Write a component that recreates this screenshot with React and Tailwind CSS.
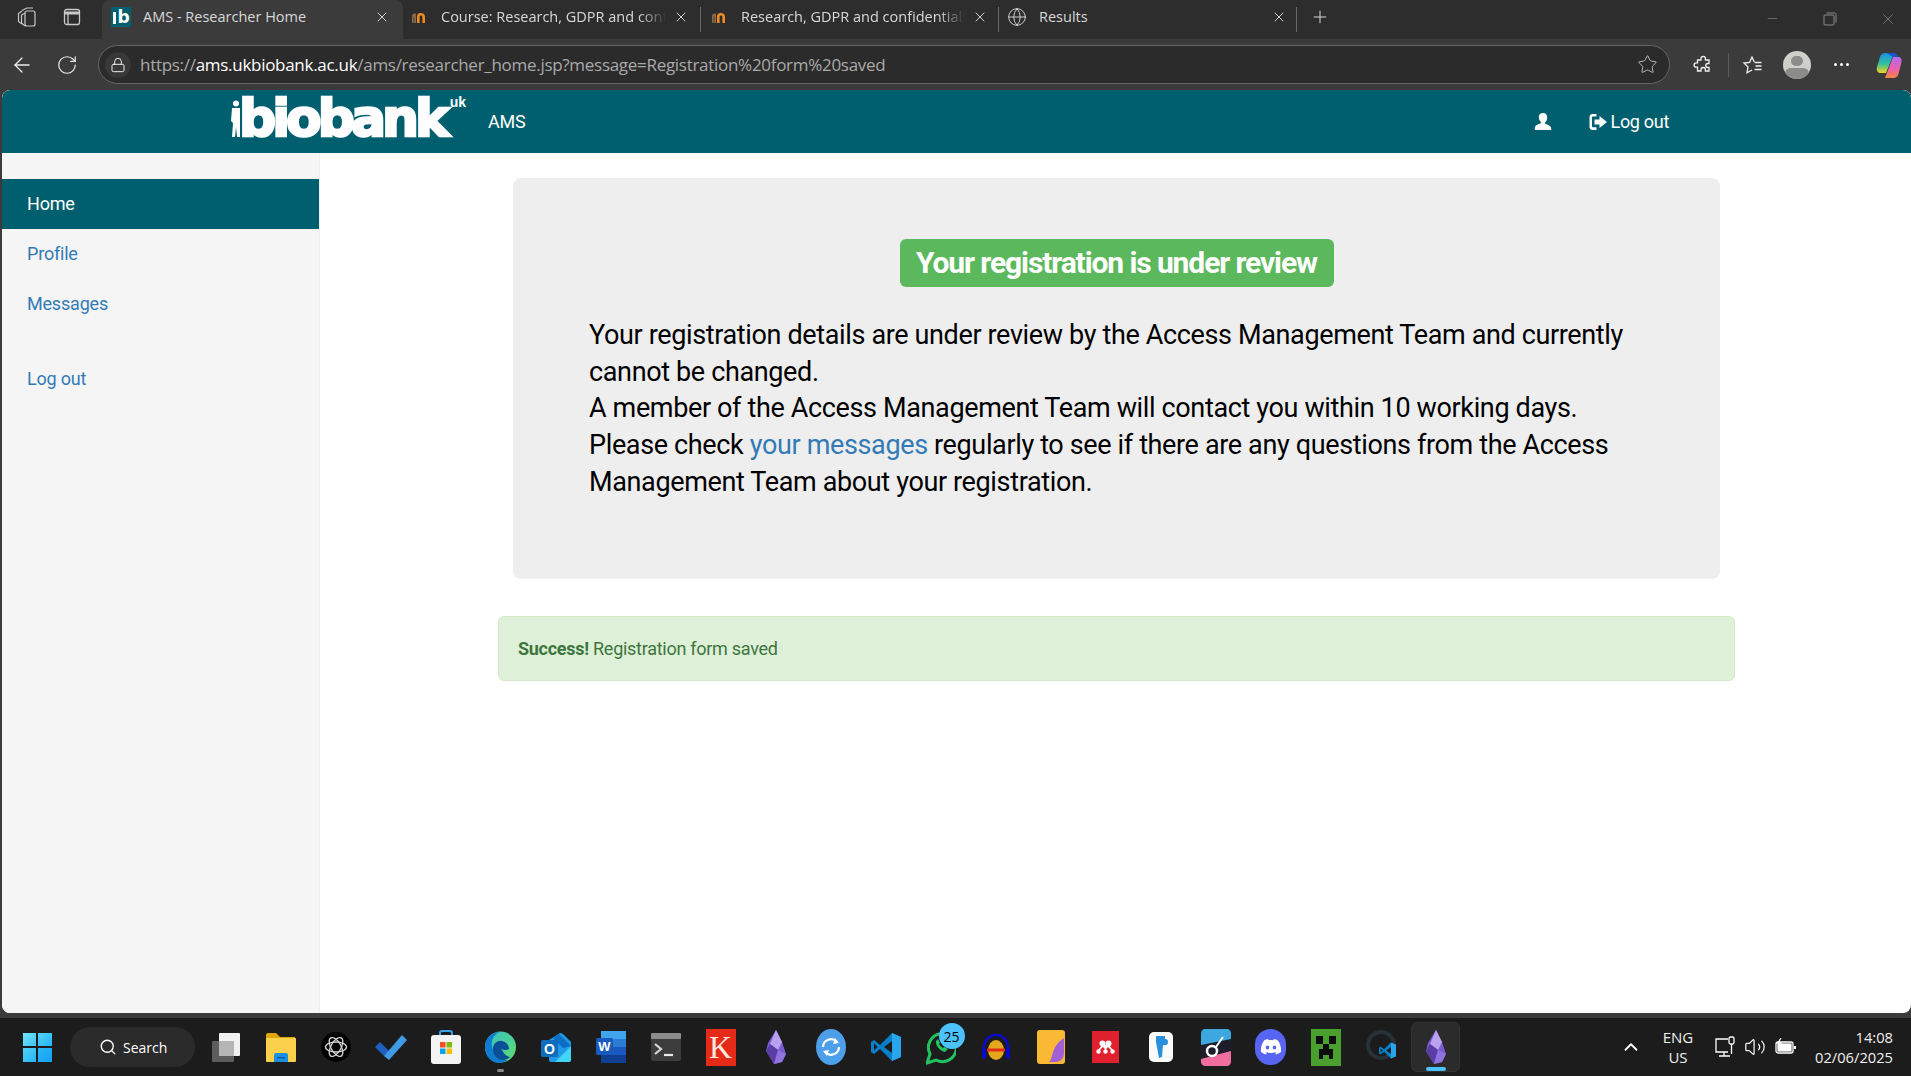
import { ArrowLeft, RotateCw, Lock, Star, X, Plus, Minus, Globe, Search, ChevronUp, Volume2 } from 'lucide-react';

const TEAL = 'bg-[#005f6e]';

function MoodleIcon() {
  return (
    <svg width="18" height="14" viewBox="0 0 18 14" className="shrink-0">
      <path d="M7 13V6.5C7 4 8.5 3 10.5 3S15 4 15 6.5V13h-2.6V7c0-1-.6-1.6-1.6-1.6S9.600 6 9.600 7v6z" fill="#f28a1d" />
      <path d="M2 13V6c0-1.500 1-2.500 2.500-2.500S6 4 6 5v8H4.200V6.500H3.600V13z" fill="#8a6a4a" />
    </svg>
  );
}

function Favicon() {
  return (
    <div className="w-5 h-5 bg-[#005f6e] shrink-0 flex items-center justify-center overflow-hidden">
      <div className="w-[3px] h-[12px] bg-white mr-[1px] mt-[2px]" />
      <span className="text-white font-bold text-[17px] leading-none tracking-[-1px] font-['DejaVu_Sans']">b</span>
    </div>
  );
}

function Tab({ icon, title, active, fade, sep, width, pad, closeRight }) {
  return (
    <div className={`relative ${width} h-[39px] flex items-center shrink-0 pb-[5px] ${pad} ${closeRight} ${active ? 'bg-[#3b3b3b] rounded-t-lg' : ''}`}>
      <div className="w-5 flex justify-center shrink-0">{icon}</div>
      <span className={`ml-3 flex-1 min-w-0 whitespace-nowrap overflow-hidden text-[14.5px] text-[#d8d8d8] font-['Open_Sans',sans-serif] ${fade ? '[mask-image:linear-gradient(to_right,black_88%,transparent)]' : ''}`}>
        {title}
      </span>
      <X size={16} strokeWidth={1.5} className="text-[#d0d0d0] ml-[7px] shrink-0" />
      {sep && <div className="absolute right-0 top-[7px] w-px h-[25px] bg-[#6a6a6a]" />}
    </div>
  );
}

function PuzzleOutline() {
  return (
    <svg width="20" height="20" viewBox="0 0 20 20" fill="none" stroke="#f0f0f0" strokeWidth="1.3">
      <path d="M8 3.500a2.200 2.200 0 0 1 4.400 0V5H16v3.500h-1.200a2 2 0 0 0 0 4H16V16h-3.600v-1.300a2.200 2.200 0 0 0-4.400 0V16H4.500v-3.800H3.300a2.200 2.200 0 0 1 0-4.400h1.200V5H8z" />
    </svg>
  );
}

function FavStar() {
  return (
    <svg width="22" height="20" viewBox="0 0 22 20" fill="none" stroke="#f0f0f0" strokeWidth="1.3">
      <path d="M12.300 7 10 2 7.600 7.300 2 8l4 4-1 5.800 5-2.800" />
      <path d="M12.500 7.500h7M13.500 11h6M12.500 14.500h7" />
    </svg>
  );
}

function Copilot() {
  return (
    <svg width="26" height="30" viewBox="0 0 26 30">
      <defs>
        <linearGradient id="cpa" x1="0" y1="0" x2="0" y2="1">
          <stop offset="0" stopColor="#1b8fe8" />
          <stop offset="0.55" stopColor="#35c29a" />
          <stop offset="1" stopColor="#f3d51e" />
        </linearGradient>
        <linearGradient id="cpb" x1="0" y1="0" x2="0" y2="1">
          <stop offset="0" stopColor="#b06cf0" />
          <stop offset="0.6" stopColor="#ee5fa5" />
          <stop offset="1" stopColor="#f4873d" />
        </linearGradient>
      </defs>
      <path d="M9 3h9l-8 20H5c-3 0-5-2-4-6l3-10c1-3 3-4 5-4z" fill="url(#cpa)" />
      <path d="M17 7h5c3 0 4 2 3.500 5l-3 12c-1 3-3 4-5 4H9l8-21z" fill="url(#cpb)" />
      <path d="M11 3h7c2 0 3 1 4 4h-5z" fill="#1457c8" />
    </svg>
  );
}

function TabBar() {
  return (
    <div className="h-[39px] bg-[#2d2d2d] flex items-center shrink-0">
      <div className="w-[102px] flex items-center shrink-0 pb-[5px]">
        <svg width="22" height="22" viewBox="0 0 22 22" fill="none" stroke="#c8c8c8" strokeWidth="1.2" className="ml-[16px]">
          <rect x="9" y="5" width="10" height="15" rx="2" />
          <path d="M9 7 5.500 9v8l3.500 3M6 5 2.500 7.500v8L6 18" />
          <path d="M6 4.500 11 2h6" />
        </svg>
        <svg width="18" height="18" viewBox="0 0 18 18" fill="none" stroke="#c8c8c8" strokeWidth="1.300" className="ml-[25px]">
          <rect x="1.500" y="1.500" width="15" height="15" rx="2" />
          <path d="M1.500 5h15" strokeWidth="3" />
          <path d="M5 6v10" />
        </svg>
      </div>
      <Tab icon={<Favicon />} title="AMS - Researcher Home" active width="w-[301px]" pad="pl-[9px]" closeRight="pr-[13px]" />
      <Tab icon={<MoodleIcon />} title="Course: Research, GDPR and confidentiality" fade sep width="w-[298px]" pad="pl-[6px]" closeRight="pr-[12px]" />
      <Tab icon={<MoodleIcon />} title="Research, GDPR and confidentiality" fade sep width="w-[298px]" pad="pl-[8px]" closeRight="pr-[11px]" />
      <Tab icon={<Globe size={20} strokeWidth={1.1} className="text-[#d8d8d8]" />} title="Results" sep width="w-[298px]" pad="pl-[8px]" closeRight="pr-[10px]" />
      <div className="pb-[5px] ml-[13px]">
        <Plus size={20} strokeWidth={1.2} className="text-[#d8d8d8]" />
      </div>
      <div className="flex-1" />
      <div className="flex items-center pb-[2px]">
        <Minus size={15} strokeWidth={1} className="text-[#8a8a8a] mr-[43px]" />
        <svg width="14" height="14" viewBox="0 0 14 14" fill="none" stroke="#8a8a8a" className="mr-[42px]">
          <rect x="1" y="3" width="10" height="10" rx="1" />
          <path d="M3.500 1h8c1 0 1.500.5 1.500 1.500v8" />
        </svg>
        <X size={18} strokeWidth={1} className="text-[#8a8a8a] mr-[14px]" />
      </div>
    </div>
  );
}

function Toolbar() {
  return (
    <div className="h-[51px] bg-[#3b3b3b] flex items-center shrink-0">
      <div className="w-[98px] flex items-center shrink-0">
        <ArrowLeft size={24} strokeWidth={1.300} className="text-[#ededed] ml-[10px]" />
        <RotateCw size={22} strokeWidth={1.300} className="text-[#ededed] ml-[22px]" />
      </div>
      <div className="w-[1572px] h-[39px] rounded-full bg-[#2b2b2b] border border-[#666666] flex items-center pl-[6px] shrink-0">
        <div className="w-[26px] h-[26px] rounded-full bg-[#383838] flex items-center justify-center">
          <Lock size={16} strokeWidth={1.500} className="text-[#ededed]" />
        </div>
        <div className="ml-[9px] text-[17px] tracking-[-0.29px] whitespace-nowrap font-['Open_Sans',sans-serif] text-[#a9a9a9]">
          https://<span className="text-white">ams.ukbiobank.ac.uk</span>/ams/researcher_home.jsp?message=Registration%20form%20saved
        </div>
        <div className="flex-1" />
        <Star size={21} strokeWidth={1.100} className="text-[#bdbdbd] mr-[11px]" />
      </div>
      <div className="ml-[23px]"><PuzzleOutline /></div>
      <div className="w-px h-[24px] bg-[#5a5a5a] ml-[15px]" />
      <div className="ml-[13px]"><FavStar /></div>
      <div className="ml-[19px] w-[28px] h-[28px] rounded-full bg-[#cfcfcb] overflow-hidden flex flex-col items-center">
        <div className="w-[12px] h-[13px] rounded-full bg-[#8c8c8a] mt-[5px]" />
        <div className="w-[24px] h-[14px] rounded-full bg-[#8c8c8a] mt-[2px]" />
      </div>
      <div className="ml-[23px] flex gap-[3px]">
        <div className="w-[3px] h-[3px] rounded-full bg-white" />
        <div className="w-[3px] h-[3px] rounded-full bg-white" />
        <div className="w-[3px] h-[3px] rounded-full bg-white" />
      </div>
      <div className="ml-[27px]"><Copilot /></div>
    </div>
  );
}

function Logo() {
  return (
    <div className="flex items-start h-[62px]">
      <svg width="9" height="38" viewBox="0 0 9 38" fill="white" className="mt-[9px] shrink-0">
        <circle cx="5" cy="3.500" r="3" />
        <path d="M1 8h8v29H6l-1-10-1 10H1l1-14-2-2z" />
      </svg>
      <span className="text-white font-['DejaVu_Sans',sans-serif] font-bold text-[52px] leading-[52px] mt-[1px] tracking-[-4px] [-webkit-text-stroke:2.5px_white] -ml-[1px]">
        biobank
      </span>
      <span className="text-white font-['Liberation_Sans',sans-serif] font-bold text-[14px] leading-none mt-[4px] ml-[4px]">uk</span>
    </div>
  );
}

function UserIcon() {
  return (
    <svg width="20" height="20" viewBox="0 0 20 20" fill="white">
      <path d="M10 1c2.800 0 4.200 2 4.200 4.700 0 2-.9 3.600-2 4.600v1.500c2.500 1 6 2 6 4.700V18H1.800v-2c0-2.700 3.500-3.700 6-4.700v-1.500c-1.100-1-2-2.600-2-4.600C5.800 3 7.200 1 10 1z" />
    </svg>
  );
}

function LogoutIcon() {
  return (
    <svg width="20" height="18" viewBox="0 0 19 18" fill="white">
      <path d="M8 1H4C2 1 1 2.500 1 4v10c0 1.500 1 3 3 3h4v-2.800H4.500c-.7 0-1-.5-1-1V4.500c0-.5.3-1 1-1H8z" />
      <path d="M11 3 18.500 9 11 15V11.500H6v-5h5z" />
    </svg>
  );
}

function SiteHeader() {
  return (
    <header className={`${TEAL} h-[63px] flex items-center rounded-t-lg shrink-0`}>
      <div className="ml-[229px] w-[257px]"><Logo /></div>
      <span className="text-white text-[18px] tracking-[-0.2px]">AMS</span>
      <div className="flex-1" />
      <UserIcon />
      <div className="ml-[35px]"><LogoutIcon /></div>
      <span className="text-white text-[18px] tracking-[-0.3px] ml-[2px] mr-[242px]">Log out</span>
    </header>
  );
}

function Sidebar() {
  return (
    <aside className="w-[318px] bg-[#f5f5f5] border-r border-[#eeeeee] pt-[26px] shrink-0 text-[18px] tracking-[-0.2px]">
      <div className={`${TEAL} h-[50px] flex items-center pl-[25px] pb-[2px] text-white`}>Home</div>
      <div className="h-[50px] flex items-center pl-[25px] pb-[2px] text-[#337ab7]">Profile</div>
      <div className="h-[50px] flex items-center pl-[25px] pb-[2px] text-[#337ab7]">Messages</div>
      <div className="h-[50px] flex items-center pl-[25px] pb-[2px] text-[#337ab7] mt-[25px]">Log out</div>
    </aside>
  );
}

function MainContent() {
  return (
    <main className="flex-1 pt-[25px] pl-[2px]">
      <div className="w-[1237px] mx-auto">
        <div className="mx-[15px] h-[401px] bg-[#eeeeee] rounded-lg pt-[61px] pl-[76px] pr-[76px]">
          <div className="flex justify-center">
            <div className="h-[48px] w-[434px] rounded-md bg-[#5cb85c] text-white font-bold text-[30px] pb-[2px] flex items-center justify-center tracking-[-1.1px]">
              Your registration is under review
            </div>
          </div>
          <p className="mt-[30px] text-[27px] leading-[36.7px] tracking-[-0.36px] text-black">
            Your registration details are under review by the Access Management Team and currently cannot be changed.
            <br />
            A member of the Access Management Team will contact you within 10 working days.
            <br />
            Please check <span className="text-[#337ab7]">your messages</span> regularly to see if there are any questions from the Access Management Team about your registration.
          </p>
        </div>
        <div className="mt-[37px] h-[65px] bg-[#dff0d8] border border-[#d6e9c6] rounded-md flex items-center pl-[19px] pb-[1px] text-[18px] tracking-[-0.27px] text-[#3c763d] whitespace-pre">
          <strong className="font-bold">Success!</strong> Registration form saved
        </div>
      </div>
    </main>
  );
}

/* taskbar icons */
const Win = () => (
  <div className="grid grid-cols-2 gap-[2px] w-[29px] h-[29px]">
    <div className="bg-gradient-to-br from-[#6fe6fb] to-[#3cc4f5]" />
    <div className="bg-gradient-to-br from-[#4fd3f8] to-[#22b4f4]" />
    <div className="bg-gradient-to-br from-[#4fd3f8] to-[#22b4f4]" />
    <div className="bg-gradient-to-br from-[#2cb8f6] to-[#119ff2]" />
  </div>
);

const Widgets = () => (
  <svg width="30" height="30" viewBox="0 0 30 30">
    <rect x="1" y="9" width="22" height="21" rx="1" fill="#5d5d5d" />
    <rect x="8" y="1" width="21" height="23" rx="1" fill="#f0f0f0" />
    <rect x="8" y="9" width="15" height="15" fill="#b5b5b5" />
  </svg>
);

const Folder = () => (
  <svg width="31" height="30" viewBox="0 0 31 30">
    <path d="M1 3c0-1 1-2 2-2h8l4 4h15v6H1z" fill="#e2a60d" />
    <rect x="1" y="6" width="30" height="24" rx="1" fill="#fbd04b" />
    <path d="M9 30v-7c0-1 1-2 2-2h10c1 0 2 1 2 2v7z" fill="#1c8fe0" />
    <rect x="12" y="25" width="8" height="1.500" fill="#0b5fa8" />
  </svg>
);

const ChatGpt = () => (
  <svg width="30" height="30" viewBox="0 0 30 30" fill="none">
    <circle cx="15" cy="15" r="15" fill="#000" />
    <g stroke="#d5d5d5" strokeWidth="1.300">
      <ellipse cx="15" cy="15" rx="10.500" ry="5" />
      <ellipse cx="15" cy="15" rx="10.500" ry="5" transform="rotate(60 15 15)" />
      <ellipse cx="15" cy="15" rx="10.500" ry="5" transform="rotate(120 15 15)" />
    </g>
  </svg>
);

const Todo = () => (
  <svg width="32" height="28" viewBox="0 0 32 28">
    <path d="M0 14l5-5 9 9-5 5z" fill="#1f5fbf" />
    <path d="M9 23 27 2l5 5-18 20z" fill="#3f9ae8" />
  </svg>
);

const Store = () => (
  <svg width="30" height="34" viewBox="0 0 30 34" fill="none">
    <path d="M9 6V3c0-1 1-2 2-2h8c1 0 2 1 2 2v3" stroke="#3aa0e8" strokeWidth="2" />
    <rect x="0" y="5" width="30" height="29" rx="3" fill="#f3f3f3" />
    <rect x="9" y="12" width="5.500" height="5.500" fill="#f25022" />
    <rect x="15.500" y="12" width="5.500" height="5.500" fill="#7fba00" />
    <rect x="9" y="18.500" width="5.500" height="5.500" fill="#00a4ef" />
    <rect x="15.500" y="18.500" width="5.500" height="5.500" fill="#ffb900" />
  </svg>
);

const Edge = () => (
  <svg width="31" height="32" viewBox="0 0 31 32">
    <defs>
      <linearGradient id="edg" x1="0" y1="0" x2="1" y2="1">
        <stop offset="0" stopColor="#36c2c9" />
        <stop offset="1" stopColor="#5fdc6b" />
      </linearGradient>
    </defs>
    <circle cx="15.500" cy="16" r="15.500" fill="url(#edg)" />
    <path d="M0 16C0 7 7 1 15 1c-6 2-9 8-8 14 1 8 8 15 16 14-3 2-6 3-9 3C6 32 0 25 0 16z" fill="#0f7cd0" />
    <path d="M8 18c0-6 5-9 9-8 5 1 7 5 7 8-3 2-7 1-8-1 2 4 4 8 9 9-3 3-7 4-11 2-4-2-6-6-6-10z" fill="#0b4f96" />
  </svg>
);

const Outlook = () => (
  <svg width="30" height="30" viewBox="0 0 30 30">
    <path d="M8 8 19 1c2 0 3 1 5 3l6 6v18c0 1-1 2-2 2H10c-1 0-2-1-2-2z" fill="#1e9be8" />
    <path d="M14 30 30 14v14c0 1-1 2-2 2z" fill="#40d4f5" />
    <path d="M18 2l12 12-8 2L12 6z" fill="#0d6dc2" />
    <rect x="0" y="8" width="17" height="17" rx="1.500" fill="#0f6cbd" />
    <text x="8.500" y="21.500" textAnchor="middle" fontSize="14" fontWeight="700" fill="white" fontFamily="Liberation Sans">O</text>
  </svg>
);

const Word = () => (
  <svg width="30" height="34" viewBox="0 0 30 34">
    <rect x="5" y="1" width="25" height="32" rx="1" fill="#2b7cd3" />
    <rect x="5" y="1" width="25" height="8" fill="#41a5ee" />
    <rect x="5" y="17" width="25" height="8" fill="#185abd" />
    <rect x="5" y="25" width="25" height="8" fill="#103f91" />
    <rect x="0" y="8" width="17" height="17" rx="1.500" fill="#185abd" />
    <text x="8.500" y="21" textAnchor="middle" fontSize="13" fontWeight="700" fill="white" fontFamily="Liberation Sans">W</text>
  </svg>
);

const Terminal = () => (
  <svg width="30" height="28" viewBox="0 0 30 28" fill="none">
    <rect width="30" height="28" rx="2" fill="#3c3c3c" />
    <rect width="30" height="6" rx="1" fill="#8c8c8c" />
    <path d="M4 11l6 5-6 5" stroke="#d8d8d8" strokeWidth="2.200" />
    <path d="M13 22h9" stroke="#e8e8e8" strokeWidth="2.200" />
  </svg>
);

const KIcon = () => (
  <div className="w-[30px] h-[37px] bg-[#e62a18] flex items-center justify-center">
    <span className="text-[#ffe9df] font-['Liberation_Serif',serif] text-[32px] leading-none">K</span>
  </div>
);

const Obsidian = () => (
  <svg width="22" height="34" viewBox="0 0 22 34">
    <path d="M11 0 3 13 1 21l8 13 8-2 4-8-4-12z" fill="#7c5bd3" />
    <path d="M11 0 5 14l8 6 4-8z" fill="#b9a2ef" />
    <path d="M5 14 1 21l8 13 4-14z" fill="#5b3da8" />
    <path d="M13 20l-4 14 8-2 4-8z" fill="#8f73de" />
  </svg>
);

const SyncIcon = () => (
  <svg width="30" height="36" viewBox="0 0 30 36" fill="none">
    <ellipse cx="15" cy="18" rx="15" ry="18" fill="#4c9fe8" />
    <path d="M7 18a8 8 0 0 1 14-5M23 18a8 8 0 0 1-14 5" stroke="white" strokeWidth="2.200" />
    <path d="M19 9l4 5-6 1zM11 27l-4-5 6-1z" fill="white" />
  </svg>
);

const VsCode = ({ size = 30 }) => (
  <svg width={size} height={size} viewBox="0 0 30 30">
    <path d="M21 1 9 13 3 8 0 10v10l3 2 6-5 12 12 9-4V5z" fill="#0a7fc9" />
    <path d="M21 1l9 4v20l-9 4z" fill="#2aa5ec" />
    <path d="M21 9l-8 6 8 6z" fill="#1b1b1b" />
    <path d="M3 11.500v7l3.500-3.500z" fill="#1b1b1b" />
  </svg>
);

const WhatsApp = () => (
  <div className="relative w-[30px] h-[36px]">
    <svg width="30" height="36" viewBox="0 0 30 36" fill="none">
      <path d="M1 34l3-9a14 14 0 1 1 6 6z" stroke="#22c35e" strokeWidth="3" />
      <path d="M10 12c-1 4 4 10 9 11l3-3-4-2-1 1c-2-1-3-3-4-4l1-1-2-4z" fill="#22c35e" />
    </svg>
    <div className="absolute -top-[6px] left-[13px] w-[26px] h-[26px] rounded-full bg-[#4cc2ff] flex items-center justify-center text-[14px] text-black font-['Open_Sans',sans-serif]">25</div>
  </div>
);

const Audacity = () => (
  <svg width="30" height="30" viewBox="0 0 30 30" fill="none">
    <path d="M3 20V15a12 12 0 0 1 24 0v5" stroke="#0a0ad0" strokeWidth="2.500" />
    <rect x="1" y="16" width="4" height="11" rx="2" fill="#0a0ad0" />
    <rect x="25" y="16" width="4" height="11" rx="2" fill="#0a0ad0" />
    <ellipse cx="15" cy="18" rx="8" ry="10" fill="#e5a81c" />
    <path d="M6 18h18" stroke="#e52a18" strokeWidth="3" />
  </svg>
);

const Sticky = () => (
  <svg width="28" height="34" viewBox="0 0 28 34">
    <rect width="28" height="34" rx="3" fill="#f9b934" />
    <path d="M27 8v15c0 5-3 9-9 9h-6C17 28 13 17 27 8z" fill="#a35fd6" />
  </svg>
);

const Mendeley = () => (
  <div className="w-[27px] h-[32px] bg-[#e1202d] flex items-center justify-center">
    <svg width="19" height="14" viewBox="0 0 19 14" fill="white">
      <circle cx="6.500" cy="3.500" r="3" />
      <circle cx="12.500" cy="3.500" r="3" />
      <circle cx="2.500" cy="11.500" r="2.200" />
      <circle cx="9.500" cy="11.500" r="2.200" />
      <circle cx="16.500" cy="11.500" r="2.200" />
      <path d="M2 10l4-5h7l4 5-1 1-4-4-2.500 3L7 7l-4 4z" />
    </svg>
  </div>
);

const Paste = () => (
  <svg width="24" height="30" viewBox="0 0 24 30">
    <rect width="24" height="30" rx="5" fill="#fbfbfb" />
    <path d="M7 4h9v3c3 0 3 2 3 3 0 4-3 3-5 3l-1 12-3 1-3-16z" fill="#2a8fdc" />
  </svg>
);

const Ocenaudio = () => (
  <svg width="30" height="37" viewBox="0 0 30 37" fill="none">
    <rect width="30" height="37" rx="4" fill="#1d1d2b" />
    <path d="M0 4c0-2 2-4 4-4h22c2 0 4 2 4 4v6L0 16z" fill="#3da7e0" />
    <path d="M0 30l30-8v11c0 2-2 4-4 4H4c-2 0-4-2-4-4z" fill="#ef6e9d" />
    <circle cx="11" cy="22" r="5" stroke="white" strokeWidth="2.500" />
    <path d="M15 18 22 8" stroke="white" strokeWidth="2" />
  </svg>
);

const Discord = () => (
  <div className="w-[31px] h-[36px] rounded-full bg-[#5865f2] flex items-center justify-center">
    <svg width="22" height="17" viewBox="0 0 22 17" fill="white">
      <path d="M18 1.500A17 17 0 0 0 14 0l-.7 1.300a15 15 0 0 0-4.600 0L8 0a17 17 0 0 0-4 1.500C1.300 5.400.6 9.200 1 13c1.700 1.300 3.300 2 5 2.500L7 13.800c-.6-.2-1.100-.5-1.600-.8l.4-.3a11 11 0 0 0 10.400 0l.4.3c-.5.300-1 .6-1.600.8l1 1.700c1.700-.5 3.300-1.200 5-2.500.4-4.400-.7-8.100-3-11.500zM7.500 10.500C6.500 10.500 5.700 9.600 5.700 8.500S6.500 6.500 7.500 6.500 9.300 7.400 9.300 8.500 8.500 10.500 7.500 10.500zm7 0c-1 0-1.800-.9-1.800-2s.8-2 1.800-2 1.800.9 1.800 2-.8 2-1.800 2z" />
    </svg>
  </div>
);

const Creeper = () => (
  <svg width="30" height="37" viewBox="0 0 30 37">
    <rect width="30" height="37" fill="#4aa02f" />
    <rect x="5" y="7" width="7" height="8" fill="#0c0c0c" />
    <rect x="18" y="7" width="7" height="8" fill="#0c0c0c" />
    <rect x="12" y="15" width="6" height="5" fill="#0c0c0c" />
    <rect x="8" y="20" width="14" height="6" fill="#0c0c0c" />
    <rect x="8" y="26" width="4" height="4" fill="#0c0c0c" />
    <rect x="18" y="26" width="4" height="4" fill="#0c0c0c" />
  </svg>
);

const GhCode = () => (
  <div className="relative w-[30px] h-[34px]">
    <svg width="30" height="34" viewBox="0 0 30 34" fill="none">
      <circle cx="15" cy="15" r="13" stroke="#263238" strokeWidth="4" />
    </svg>
    <div className="absolute left-[13px] top-[12px]"><VsCode size={17} /></div>
  </div>
);

function TaskIcon({ children, dot }) {
  return (
    <div className="relative w-[55px] h-[50px] flex items-center justify-center shrink-0">
      {children}
      {dot && <div className="absolute bottom-0 left-[24px] w-[7px] h-[3px] rounded-full bg-[#8a8a8a]" />}
    </div>
  );
}

function ActiveTaskIcon({ children }) {
  return (
    <div className="relative w-[49px] h-[50px] ml-[3px] flex items-center justify-center shrink-0 bg-[#2b2b2b] rounded-md border border-[#333333]">
      {children}
      <div className="absolute bottom-0 left-[14px] w-[20px] h-[4px] rounded-full bg-[#4cc2ff]" />
    </div>
  );
}

function Taskbar() {
  return (
    <div className="h-[58px] bg-[#1c1c1c] flex items-center shrink-0 text-white">
      <div className="w-[70px] flex justify-center shrink-0 pl-[4px]"><Win /></div>
      <div className="w-[125px] h-[40px] rounded-full bg-[#2b2b2b] flex items-center pl-[29px] shrink-0">
        <Search size={18} strokeWidth={1.800} />
        <span className="ml-[6px] text-[14px] font-['Open_Sans',sans-serif]">Search</span>
      </div>
      <div className="flex items-center ml-[3px] shrink-0">
        <TaskIcon><Widgets /></TaskIcon>
        <TaskIcon><Folder /></TaskIcon>
        <TaskIcon><ChatGpt /></TaskIcon>
        <TaskIcon><Todo /></TaskIcon>
        <TaskIcon><Store /></TaskIcon>
        <TaskIcon dot><Edge /></TaskIcon>
        <TaskIcon><Outlook /></TaskIcon>
        <TaskIcon><Word /></TaskIcon>
        <TaskIcon><Terminal /></TaskIcon>
        <TaskIcon><KIcon /></TaskIcon>
        <TaskIcon><Obsidian /></TaskIcon>
        <TaskIcon><SyncIcon /></TaskIcon>
        <TaskIcon><VsCode /></TaskIcon>
        <TaskIcon><WhatsApp /></TaskIcon>
        <TaskIcon><Audacity /></TaskIcon>
        <TaskIcon><Sticky /></TaskIcon>
        <TaskIcon><Mendeley /></TaskIcon>
        <TaskIcon><Paste /></TaskIcon>
        <TaskIcon><Ocenaudio /></TaskIcon>
        <TaskIcon><Discord /></TaskIcon>
        <TaskIcon><Creeper /></TaskIcon>
        <TaskIcon><GhCode /></TaskIcon>
        <ActiveTaskIcon><Obsidian /></ActiveTaskIcon>
      </div>
      <ChevronUp size={22} strokeWidth={2} className="ml-[160px]" />
      <div className="ml-[12px] w-[48px] text-center text-[15px] leading-[20.5px] font-['Open_Sans',sans-serif] text-[#efefef]">
        <div>ENG</div>
        <div>US</div>
      </div>
      <svg width="22" height="22" viewBox="0 0 22 22" fill="none" stroke="white" strokeWidth="1.300" className="ml-[12px]">
        <path d="M14 3H2v13h12M5 20h11M10 16v4" />
        <rect x="15" y="1" width="5" height="7" rx="1.500" />
        <path d="M17.500 8v10" />
      </svg>
      <Volume2 size={22} strokeWidth={1.300} className="ml-[8px]" />
      <svg width="22" height="18" viewBox="0 0 22 18" fill="none" stroke="white" strokeWidth="1.300" className="ml-[9px]">
        <rect x="1" y="4" width="17" height="11" rx="2" />
        <rect x="3" y="6" width="13" height="7" fill="white" />
        <path d="M20 8v3" strokeWidth="2" />
        <path d="M6 0 3 5h3L4 8" />
      </svg>
      <div className="flex-1 text-right mr-[18px] text-[14.7px] leading-[20.5px] font-['Open_Sans',sans-serif] text-[#f0f0f0]">
        <div>14:08</div>
        <div>02/06/2025</div>
      </div>
    </div>
  );
}

export default function App() {
  return (
    <div className="w-[1911px] h-[1076px] overflow-hidden flex flex-col bg-[#3b3b3b] font-['Roboto',sans-serif]">
      <TabBar />
      <Toolbar />
      <div className="h-[923px] ml-[2px] flex flex-col bg-white rounded-lg overflow-hidden shrink-0">
        <SiteHeader />
        <div className="flex-1 flex min-h-0">
          <Sidebar />
          <MainContent />
        </div>
      </div>
      <div className="h-[5px] shrink-0" />
      <Taskbar />
    </div>
  );
}
